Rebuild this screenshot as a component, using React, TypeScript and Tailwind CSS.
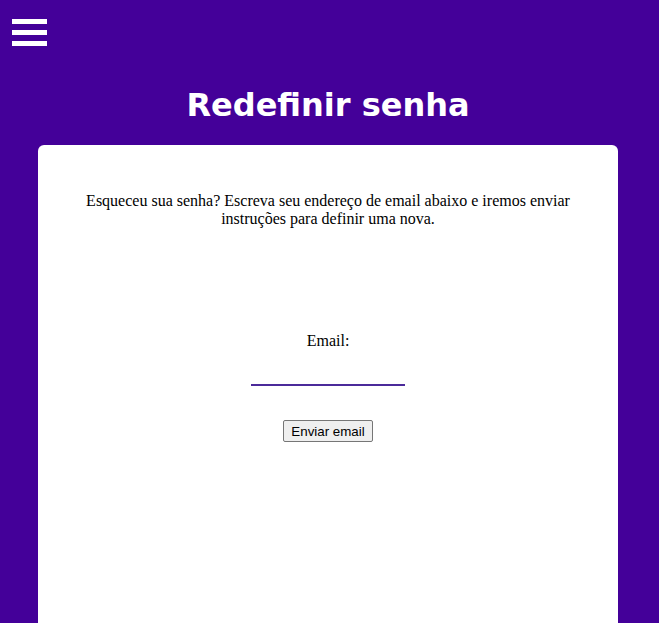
import { useState } from 'react';

export default function App() {
  const [email, setEmail] = useState('');

  return (
    <div className="h-screen bg-[#440099] overflow-hidden">
      {/* Menu */}
      <button className="ml-[12px] mt-[19px] flex flex-col gap-[6px] w-[35px]" aria-label="menu">
        <span className="block h-[5px] w-[35px] bg-white" />
        <span className="block h-[5px] w-[35px] bg-white" />
        <span className="block h-[5px] w-[35px] bg-white" />
      </button>

      <h1 className="w-[656px] text-center text-white font-bold text-[32px] leading-[40px] mt-[39px] font-['DejaVu_Sans',Verdana,sans-serif]">
        Redefinir senha
      </h1>

      {/* Card */}
      <div className="ml-[38px] mt-[20px] w-[580px] h-[478px] bg-white rounded-t-[6px] flex flex-col items-center font-['Liberation_Serif','Times_New_Roman',serif] text-black text-[16px]">
        <p className="mt-[47px] w-[500px] text-center leading-[18px]">
          Esqueceu sua senha? Escreva seu endereço de email abaixo e iremos enviar instruções para definir uma nova.
        </p>

        <label className="mt-[104px] flex flex-col items-center">
          <span className="leading-[18px]">Email:</span>
          <input
            type="email"
            value={email}
            onChange={(e) => setEmail(e.target.value)}
            className="mt-[14px] w-[154px] h-[22px] border-b-[2px] border-[#4b2a9a] outline-none bg-transparent"
          />
        </label>

        <button className="mt-[34px] h-[22px] px-[7px] bg-[#efefef] border border-[#767676] rounded-[2px] text-[13.33px] leading-[15px] font-['Liberation_Sans',Arial,sans-serif]">
          Enviar email
        </button>
      </div>
    </div>
  );
}
